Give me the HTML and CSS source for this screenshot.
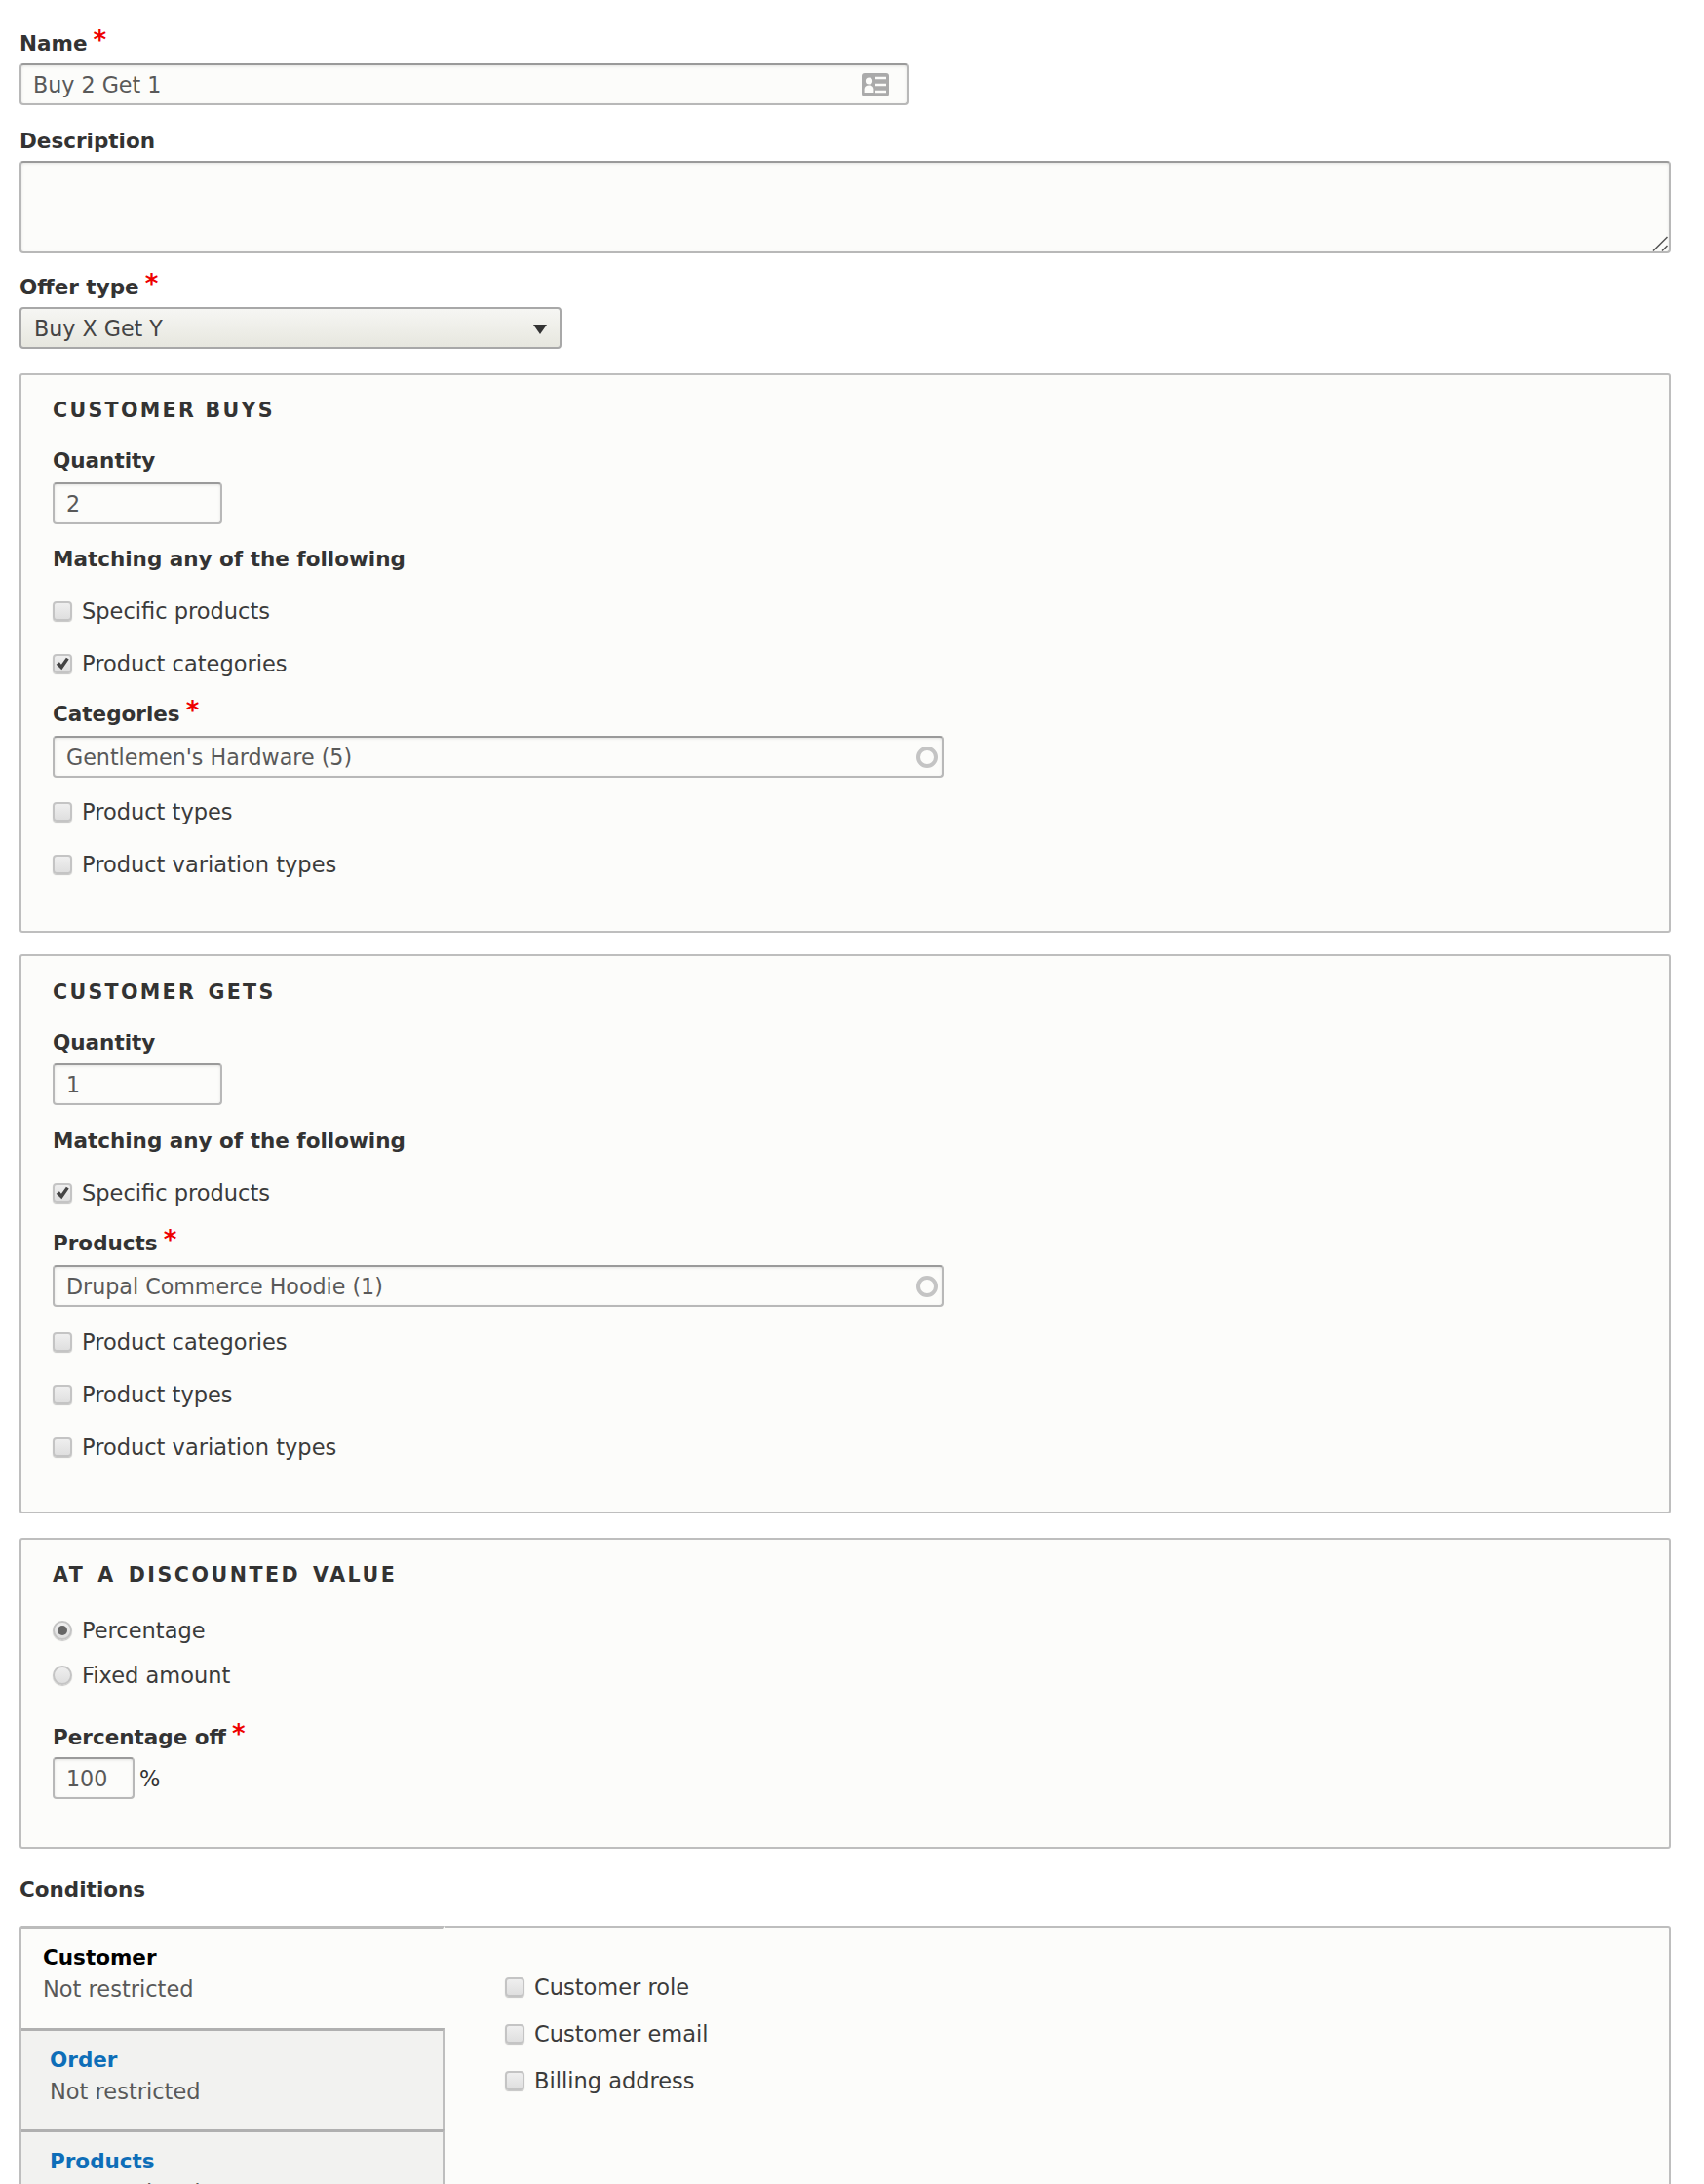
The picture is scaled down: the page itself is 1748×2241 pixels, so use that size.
FILE: index.html
```html
<!DOCTYPE html>
<html lang="en">
<head>
<meta charset="utf-8">
<title>Edit promotion</title>
<link rel="stylesheet" href="styles.css">
</head>
<body>
<form class="page">
  <div class="field field-name">
    <label class="lbl req">Name</label>
    <div class="control w-name">
      <input class="text" type="text" value="Buy 2 Get 1">
      <svg class="card-icon" viewBox="0 0 28 24" width="28" height="24"><rect width="28" height="24" rx="3" fill="#aaa"/><circle cx="7.5" cy="8" r="3.6" fill="#fcfcfa"/><path d="M2.6 20v-3.500c0-2.500 2-4 4.900-4s4.900 1.500 4.900 4V20z" fill="#fcfcfa"/><path d="M14 5h11M14 12h11M14 19h11" stroke="#fcfcfa" stroke-width="2.400"/></svg>
    </div>
  </div>
  <div class="field field-desc">
    <label class="lbl">Description</label>
    <div class="control">
      <textarea class="area"></textarea>
      <svg class="grip" viewBox="0 0 16 16" width="16" height="16"><path d="M1 15.500 15.500 1M10 15.500 15.500 10" stroke="#555" stroke-width="1.500" fill="none"/></svg>
    </div>
  </div>
  <div class="field field-offer">
    <label class="lbl req">Offer type</label>
    <div class="select-wrap">
      <select class="select"><option>Buy X Get Y</option></select>
    </div>
  </div>

  <div class="group group-buys">
    <div class="legend">CUSTOMER BUYS</div>
    <label class="lbl lbl-q">Quantity</label>
    <input class="text qty" type="text" value="2">
    <div class="lbl match">Matching any of the following</div>
    <label class="check first"><input type="checkbox"><span>Specific products</span></label>
    <label class="check"><input type="checkbox" checked><span>Product categories</span></label>
    <label class="lbl req sub">Categories</label>
    <div class="control w-auto">
      <input class="text" type="text" value="Gentlemen's Hardware (5)">
      <span class="throbber"></span>
    </div>
    <label class="check after-auto"><input type="checkbox"><span>Product types</span></label>
    <label class="check"><input type="checkbox"><span>Product variation types</span></label>
  </div>

  <div class="group group-gets">
    <div class="legend">CUSTOMER GETS</div>
    <label class="lbl lbl-q">Quantity</label>
    <input class="text qty" type="text" value="1">
    <div class="lbl match">Matching any of the following</div>
    <label class="check first"><input type="checkbox" checked><span>Specific products</span></label>
    <label class="lbl req sub">Products</label>
    <div class="control w-auto">
      <input class="text" type="text" value="Drupal Commerce Hoodie (1)">
      <span class="throbber"></span>
    </div>
    <label class="check after-auto"><input type="checkbox"><span>Product categories</span></label>
    <label class="check"><input type="checkbox"><span>Product types</span></label>
    <label class="check"><input type="checkbox"><span>Product variation types</span></label>
  </div>

  <div class="group group-value">
    <div class="legend">AT A DISCOUNTED VALUE</div>
    <label class="check radio-first"><input type="radio" name="v" checked><span>Percentage</span></label>
    <label class="check radio-next"><input type="radio" name="v"><span>Fixed amount</span></label>
    <label class="lbl req pct-lbl">Percentage off</label>
    <div class="pct-row"><input class="text pct" type="text" value="100"><span>%</span></div>
  </div>

  <div class="cond-title">Conditions</div>
  <div class="tabs">
    <ul class="tab-menu">
      <li class="tab active"><strong>Customer</strong><span>Not restricted</span></li>
      <li class="tab"><a href="#">Order</a><span>Not restricted</span></li>
      <li class="tab"><a href="#">Products</a><span>Not restricted</span></li>
    </ul>
    <div class="tab-pane">
      <label class="check"><input type="checkbox"><span>Customer role</span></label>
      <label class="check"><input type="checkbox"><span>Customer email</span></label>
      <label class="check"><input type="checkbox"><span>Billing address</span></label>
    </div>
  </div>
</form>
</body>
</html>
```
FILE: styles.css
```css
html, body { margin: 0; padding: 0; background: #fff; }
body { height: 2241px; overflow: hidden; }
.page {
  box-sizing: border-box;
  height: 2241px;
  overflow: hidden;
  padding: 0 34px 0 20px;
  font-family: "DejaVu Sans", "Open Sans", sans-serif;
  font-size: 22.5px;
  line-height: 26px;
  color: #333;
}
.lbl { display: block; font-weight: 700; height: 26px; line-height: 28px; color: #333; font-size: 21.5px; }
.req::after { content: "*"; color: #e00; font-size: 26px; margin-left: 6px; line-height: 20px; font-weight: 700; position: relative; top: -2px; }
.field-name { padding-top: 31px; }
.field-desc { padding-top: 23px; }
.field-offer { padding-top: 21px; }
.field .lbl { margin-bottom: 8px; }
.control { position: relative; }
.w-name { width: 912px; }
.w-auto { width: 914px; }
.text {
  box-sizing: border-box;
  display: block;
  width: 100%;
  height: 43px;
  margin: 0;
  padding: 0 12px;
  border: 2px solid #b8b8b8;
  border-top-color: #9a9a9a;
  border-radius: 4px;
  background: #fcfcfa;
  box-shadow: inset 0 1px 3px rgba(0,0,0,.1);
  font: inherit;
  font-size: 22.2px;
  color: #595959;
  outline: none;
}
.card-icon { position: absolute; right: 20px; top: 10px; }
.grip { position: absolute; right: 3px; bottom: 2px; pointer-events: none; }
.throbber {
  position: absolute;
  right: 6px;
  top: 11px;
  box-sizing: border-box;
  width: 22px;
  height: 22px;
  border: 4px solid #c4c4c4;
  border-radius: 50%;
}
.area {
  box-sizing: border-box;
  display: block;
  width: 100%;
  height: 95px;
  margin: 0;
  padding: 8px 12px;
  border: 2px solid #b8b8b8;
  border-top-color: #9a9a9a;
  border-radius: 4px;
  background: #fcfcfa;
  box-shadow: inset 0 1px 3px rgba(0,0,0,.1);
  font: inherit;
  outline: none;
  resize: none;
}
.select-wrap { position: relative; width: 556px; }
.select-wrap::after {
  content: "";
  position: absolute;
  right: 15px;
  top: 18px;
  border-style: solid;
  border-width: 10px 7.500px 0;
  border-color: #333 transparent transparent;
  pointer-events: none;
}
.select {
  appearance: none;
  box-sizing: border-box;
  display: block;
  width: 100%;
  height: 43px;
  margin: 0;
  padding: 0 13px;
  border: 2px solid #a8a8a8;
  border-radius: 4px;
  background: linear-gradient(#f6f6f3, #e7e7df);
  font: inherit;
  font-size: 22.2px;
  color: #444;
  outline: none;
}
.group {
  box-sizing: border-box;
  border: 2px solid #bebebe;
  border-radius: 3px;
  background: #fcfcfa;
  padding: 22px 32px 0;
}
.group-buys { margin-top: 25px; height: 574px; }
.group-gets { margin-top: 22px; height: 574px; padding-top: 23px; }
.group-value { margin-top: 25px; height: 319px; }
.legend { font-weight: 700; letter-spacing: 2.300px; height: 26px; line-height: 28px; font-size: 20.6px; color: #333; }
.group-gets .legend { word-spacing: 3px; }
.group-value .legend { letter-spacing: 2.500px; word-spacing: 3.300px; }
.lbl-q { margin-top: 26px; margin-bottom: 9px; }
.group-buys .lbl-q { margin-bottom: 10px; }
.qty { width: 174px; }
.match { margin-top: 22px; }
.group-gets .match { margin-top: 23px; }
.check { display: flex; align-items: center; gap: 10px; height: 26px; margin-top: 28px; color: #3b3b3b; }
.check.first { margin-top: 28px; }
.check.after-auto { margin-top: 23px; }
.group-buys .after-auto { margin-top: 22px; }
.sub { margin-top: 25px; margin-bottom: 10px; }
.check input {
  appearance: none;
  box-sizing: border-box;
  position: relative;
  flex: none;
  width: 20px;
  height: 20px;
  margin: 0;
  border: 2px solid #c4c4c4;
  border-radius: 4px;
  background: linear-gradient(#efefef, #dfdfdf);
  box-shadow: 0 1px 1px rgba(0,0,0,.22);
}
.check input[type="checkbox"]:checked::after {
  content: "";
  position: absolute;
  inset: 1px;
  background: #444;
  clip-path: polygon(5% 55%, 28% 38%, 42% 55%, 78% 5%, 98% 18%, 45% 95%);
}
.check input[type="radio"] { border-radius: 50%; }
.check input[type="radio"]:checked::after {
  content: "";
  position: absolute;
  inset: 3px;
  border-radius: 50%;
  background: #666;
}
.radio-first { margin-top: 32px; }
.radio-next { margin-top: 20px; }
.pct-lbl { margin-top: 37px; margin-bottom: 8px; }
.pct-row { display: flex; align-items: center; gap: 5px; }
.pct { width: 84px; }
.cond-title { font-weight: 700; font-size: 21.5px; line-height: 28px; margin-top: 28px; height: 26px; }
.tabs {
  position: relative;
  margin-top: 25px;
  box-sizing: border-box;
  height: 400px;
  display: flex;
  border: 2px solid #bebebe;
  border-radius: 3px;
  background: #fcfcfa;
}
.tab-menu { list-style: none; margin: -2px 0 0; padding: 0; width: 434px; flex: none; }
.tab {
  box-sizing: border-box;
  height: 104px;
  padding: 17px 7px 0 29px;
  display: flex;
  flex-direction: column;
  gap: 6px;
  background: #f2f2f0;
  border-top: 3px solid #b0b0b0;
  border-right: 2px solid #bebebe;
}
.tab span { color: #595959; }
.tab a { color: #0e6eb8; font-weight: 700; font-size: 21.5px; text-decoration: none; }
.tab.active { background: #fcfcfa; border-right-color: transparent; padding: 17px 0 0 22px; height: 105px; border-top-color: #bcbcbc; gap: 6px; }
.tab.active strong { color: #000; font-size: 21.5px; }
.tab-pane { padding: 20px 0 0 62px; }
.tab-pane .check { margin-top: 22px; }
.tab-pane .check:first-child { margin-top: 28px; }
```
